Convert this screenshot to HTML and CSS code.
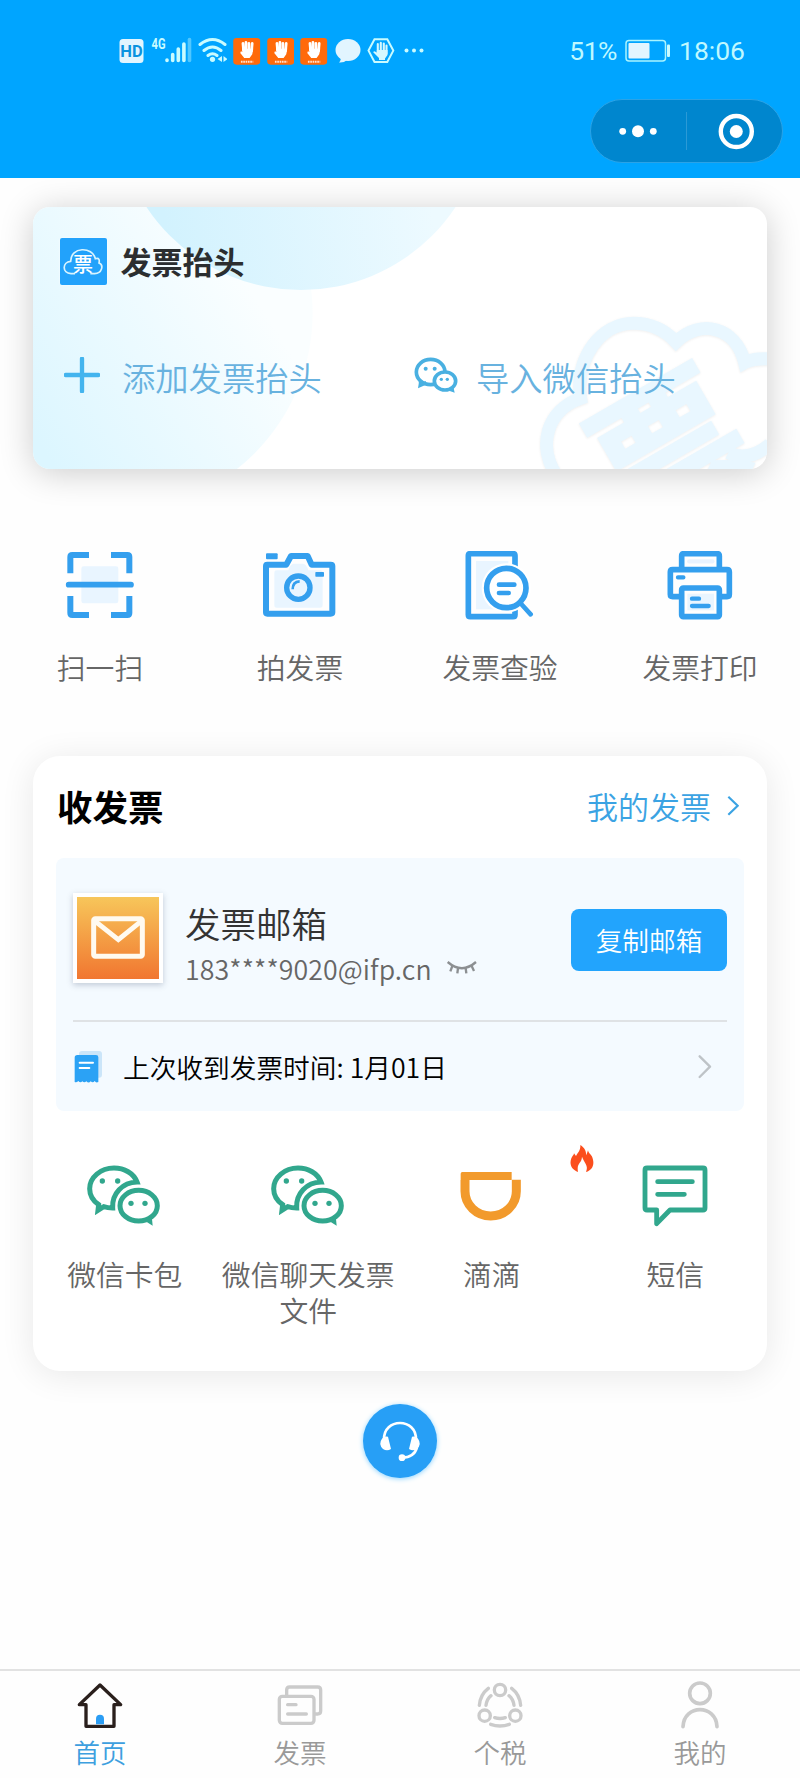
FILE: index.html
```html
<!DOCTYPE html>
<html lang="zh-CN">
<head>
<meta charset="utf-8">
<title>发票</title>
<link rel="stylesheet" href="styles.css">
</head>
<body>
<svg class="defs" aria-hidden="true">
  <symbol id="hand" viewBox="400 52 81 81">
    <rect x="400" y="52" width="81" height="80" rx="10" fill="#ff6a0a"/>
    <path d="M429 68l2 22M438 65v25M447 68v22M457 68l-2 23" stroke="#fff" stroke-width="8" stroke-linecap="round"/>
    <path d="M426 84h34l-3 17-8 11h-16l-12-15 2-5 5 2z" fill="#fff"/>
    <path d="M423 123h37" stroke="#ffe3d0" stroke-width="6" stroke-dasharray="5 2"/>
  </symbol>
  <symbol id="wechat" viewBox="200 130 225 192">
    <path d="M353 187C343 161 315 145 284 145c-40 0-73 28-73 62 0 20 10 36 27 48l-2 17 17-11c9 3 17 4 27 4-3-43 30-77 73-78z" fill="none" stroke="currentColor" stroke-width="15"/>
    <ellipse cx="358" cy="258" rx="56" ry="46" fill="none" stroke="currentColor" stroke-width="15"/>
    <path d="M374 302l26 16-3-30z" fill="currentColor"/>
    <g fill="currentColor"><circle cx="249" cy="184" r="8"/><circle cx="295" cy="184" r="8"/><circle cx="335" cy="251" r="8"/><circle cx="377" cy="251" r="8"/></g>
  </symbol>
</svg>

<header class="top">
  <div class="status">
    <div class="status-icons">
      <svg width="26" height="30" viewBox="119 36 26 30"><rect x="119.5" y="39" width="24" height="24" rx="3.5" fill="#e2f5ff"/><text x="131.5" y="56.500" class="hd">HD</text></svg>
      <svg width="41" height="30" viewBox="151 36 41 30"><text x="151.5" y="49" class="net" textLength="14" lengthAdjust="spacingAndGlyphs">4G</text><g stroke="#c9fbff" stroke-width="3.6" stroke-linecap="round"><path d="M167 60v.5M172.7 54.500v6M178.300 49v11.500M183.900 44v16.500"/><path d="M189.500 39.500v21" opacity=".4"/></g></svg>
      <svg width="29" height="30" viewBox="198 36 29 30"><g fill="none" stroke="#c9fbff" stroke-width="3" stroke-linecap="round"><path d="M200 44.500q12.500-10 25 0M204 50.500q8.500-7 17 0M208 55.500q4.500-3.500 9 0"/></g><circle cx="212.500" cy="59.300" r="2.600" fill="#c9fbff"/><path d="M222 56v6l-4.500-3zM223.500 62v-6l4 3z" fill="#c9fbff"/></svg>
      <svg width="27.500" height="27"><use href="#hand"/></svg>
      <svg width="27.500" height="27"><use href="#hand"/></svg>
      <svg width="27.500" height="27"><use href="#hand"/></svg>
      <svg width="27" height="30" viewBox="333.500 36 27 30"><ellipse cx="347.500" cy="50" rx="12.500" ry="11" fill="#e2f5ff"/><path d="M340 56q1 4-1.500 6.500 5 .5 9-3z" fill="#e2f5ff"/></svg>
      <svg width="28" height="30" viewBox="366.500 36 28 30"><path d="M374 39.300h12.800l6 11.300-6 11.300H374l-6-11.300z" fill="none" stroke="#c9fbff" stroke-width="2"/><path d="M377.300 44v8M380.300 42.800v8M383.300 43.500v8M386 45.500v8" stroke="#d5f8ff" stroke-width="2.100" stroke-linecap="round"/><path d="M376.300 50H387v5l-2.500 3.500V60h-6v-2l-6-6 1.500-.7 2.300 1.200z" fill="#d5f8ff"/></svg>
      <svg width="24" height="30" viewBox="400.500 36 24 30" fill="#c9fbff"><circle cx="406" cy="50.500" r="2"/><circle cx="413.500" cy="50.500" r="2"/><circle cx="421" cy="50.500" r="2"/></svg>
    </div>
    <div class="status-right">
      <span class="pct">51%</span>
      <svg width="46" height="24" viewBox="624 39 46 24"><rect x="626" y="40.500" width="39.500" height="20.500" rx="3" fill="none" stroke="#a9f4ff" stroke-width="1.500"/><rect x="628.500" y="43" width="21" height="15.500" rx="1" fill="#e2f5ff"/><rect x="667" y="44.500" width="3" height="12.500" rx="1" fill="#c9fbff"/></svg>
      <span>18:06</span>
    </div>
  </div>
  <div class="capsule">
    <svg width="190" height="62" viewBox="590 99 190 62"><g fill="#fff"><circle cx="621.700" cy="130.300" r="3.400"/><circle cx="637" cy="130.300" r="6"/><circle cx="652.300" cy="130.300" r="3.400"/><circle cx="735.300" cy="130.500" r="6.500"/></g><path d="M685.500 111v38" stroke="#2b9ad6" stroke-width="1"/><circle cx="735.300" cy="130.500" r="15.500" fill="none" stroke="#fff" stroke-width="4.400"/></svg>
  </div>
</header>

<main>
  <section class="title-card">
    <svg class="card-bg" width="734" height="262" viewBox="33 207 734 262">
      <defs>
        <linearGradient id="g1" gradientUnits="userSpaceOnUse" x1="50" y1="460" x2="270" y2="320"><stop offset="0" stop-color="#dcf6ff"/><stop offset="1" stop-color="#fafeff"/></linearGradient>
        <linearGradient id="g2" gradientUnits="userSpaceOnUse" x1="170" y1="250" x2="430" y2="200"><stop offset="0" stop-color="#d2f2fe"/><stop offset="1" stop-color="#edfaff"/></linearGradient>
      </defs>
      <circle cx="114" cy="313" r="198.600" fill="url(#g1)"/>
      <circle cx="301" cy="104.700" r="185.300" fill="url(#g2)"/>
      <g class="mark" transform="translate(400 180) scale(.33333)">
        <path d="M472 890C410 800 440 690 542 655 525 530 605 430 700 430c50 0 95 20 128 56 75-72 180-45 206 62 25-14 50-12 80-12M985 818q60 30 125-25" fill="none" stroke="#e9f7ff" stroke-width="39"/>
        <g transform="translate(806 804) rotate(-30)"><text class="mark-char" y="165">票</text></g>
      </g>
    </svg>
    <div class="card-head">
      <span class="logo"><svg width="47" height="47" viewBox="180 173 141 141"><path d="M226 280h-12c-27-1-27-35-1-37 0-45 66-45 74-8 12-4 13 5 11 13 15 6 9 32-13 32h-13" transform="translate(-1 0)" fill="none" stroke="#d8f4ff" stroke-width="5"/><text x="249" y="275" class="logo-char">票</text></svg></span>
      <h1>发票抬头</h1>
    </div>
    <div class="card-links">
      <a class="link"><svg width="36" height="36" viewBox="192 533 108 108"><path d="M246 538v98M197 587h98" stroke="#43b4ee" stroke-width="13" stroke-linecap="round"/></svg><span>添加发票抬头</span></a>
      <a class="link"><svg width="44" height="36" viewBox="41 532 132 108"><g fill="none" stroke="#49b0e1" stroke-width="11"><ellipse cx="91" cy="577" rx="43" ry="38"/><path d="M62 604l-2 13 18-8"/><ellipse cx="134" cy="604" rx="32" ry="27" fill="#fff"/></g><g fill="#49b0e1"><path d="M142 632l21 7-4-18zM55 604l2 17 14-8z"/><circle cx="76" cy="567" r="6"/><circle cx="103" cy="567" r="6"/><circle cx="123" cy="599" r="5"/><circle cx="141" cy="599" r="5"/></g></svg><span>导入微信抬头</span></a>
    </div>
  </section>

  <nav class="actions">
    <a class="action"><svg width="74" height="70" viewBox="99 65 222 210"><rect x="154" y="111" width="111" height="111" rx="7" fill="#e9f5ff"/><g fill="none" stroke="#349fee" stroke-width="18"><path d="M121 132V83q0-6 6-6h50M243 77h49q6 0 6 6v49M298 200v51q0 6-6 6h-49M177 257h-50q-6 0-6-6v-51"/><path d="M116 166h187" stroke-width="17" stroke-linecap="round"/></g></svg><span>扫一扫</span></a>
    <a class="action"><svg width="74" height="70" viewBox="699 65 222 210"><path d="M740 123h35q6-20 16-20h28q10 0 16 20h35q8 0 8 8v96q0 8-8 8H740q-7 0-7-8v-97q0-7 7-7z" fill="#e9f5ff"/><g fill="none" stroke="#349fee" stroke-width="18" stroke-linejoin="round"><path d="M708 110q0-4 4-4h57l14-26h50l12 26h57q5 0 5 4v139q0 4-5 4H712q-4 0-4-4z"/><circle cx="805" cy="175" r="35" stroke-width="16"/><path d="M788 180q0-23 21-24" stroke-width="8"/></g><g fill="#349fee"><rect x="708" y="72" width="35" height="18" rx="3"/><rect x="856" y="128" width="26" height="14" rx="2"/></g></svg><span>拍发票</span></a>
    <a class="action"><svg width="74" height="70" viewBox="190 64 222 210"><rect x="229" y="94" width="97" height="145" fill="#e9f5ff"/><path d="M346 125V78q0-6-6-6H212q-6 0-6 6v177q0 6 6 6h128q6 0 6-6v-36" fill="none" stroke="#349fee" stroke-width="17"/><circle cx="320" cy="175" r="74" fill="#fff"/><circle cx="320" cy="175" r="59" fill="#fff" stroke="#349fee" stroke-width="17"/><path d="M362 220l31 34M298 165h46M298 190h29" stroke="#349fee" stroke-width="14" stroke-linecap="round"/></svg><span>发票查验</span></a>
    <a class="action"><svg width="74" height="70" viewBox="789 64 222 210"><g fill="none" stroke="#349fee" stroke-width="17" stroke-linejoin="round"><path d="M845 118V79q0-7 7-7h99q7 0 7 7v39M845 201h-27q-7 0-7-7v-67q0-7 7-7h163q7 0 7 7v67q0 7-7 7h-23"/><rect x="845" y="175" width="113" height="86" rx="5"/></g><path d="M868 95h69" stroke="#e9f3ff" stroke-width="13" stroke-linecap="round"/><rect x="862" y="192" width="80" height="50" fill="#e9f5ff"/><path d="M834 143h16M876 207h21M876 229h50" stroke="#349fee" stroke-width="13" stroke-linecap="round"/></svg><span>发票打印</span></a>
  </nav>

  <section class="receive">
    <div class="receive-head">
      <h2>收发票</h2>
      <a>我的发票<svg width="12" height="22" viewBox="922 169 36 66"><path d="M926 174l28 27-28 27" fill="none" stroke="#3ba3e3" stroke-width="6.500"/></svg></a>
    </div>
    <div class="mailbox">
      <div class="mail-row">
        <span class="mail-icon"><svg width="54" height="43" viewBox="212 529 162 129"><rect x="220" y="537" width="146" height="113" rx="5" fill="none" stroke="#fffaf0" stroke-width="15"/><path d="M225 545l69 55 68-55" fill="none" stroke="#fffaf0" stroke-width="15"/></svg></span>
        <div class="mail-text">
          <strong>发票邮箱</strong>
          <span class="addr">183****9020@ifp.cn<svg width="32" height="16" viewBox="77 668 96 48"><path d="M82 674q43 37 85 0M96 686l-6 16M113 692l-2 16M136 692l2 16M154 686l7 15" fill="none" stroke="#8c8f92" stroke-width="7"/></svg></span>
        </div>
        <button>复制邮箱</button>
      </div>
      <div class="last-row">
        <svg width="30" height="34" viewBox="160 930 90 102"><rect x="178" y="933" width="69" height="80" rx="9" fill="#cbe5f9"/><path d="M173 945h56q7 0 7 7v74q-7 4-11-3-5 7-12 1-6 7-13 0-6 6-12 0-6 6-12-1-6 6-11 3v-73q0-8 8-8z" fill="#2ba2f5"/><path d="M180 968h40M180 984h29" stroke="#fff" stroke-width="6" stroke-linecap="round"/></svg>
        <span>上次收到发票时间: 1月01日</span>
        <svg class="chev" width="15" height="24" viewBox="830 945 45 72"><path d="M835 949l31 31-31 31" fill="none" stroke="#bec3c7" stroke-width="7" stroke-linecap="round" stroke-linejoin="round"/></svg>
      </div>
    </div>
    <div class="sources">
      <a class="source"><svg class="green" width="75" height="64"><use href="#wechat"/></svg><span>微信卡包</span></a>
      <a class="source"><svg class="green" width="75" height="64"><use href="#wechat"/></svg><span>微信聊天发票文件</span></a>
      <a class="source"><svg width="75" height="64" viewBox="102 130 225 192"><path d="M135 181v34a77 74 0 0 0 154 0v-35" fill="none" stroke="#f29a2c" stroke-width="27"/><path d="M122 181v-19q0-5 5-5h148v24z" fill="#f29a2c"/></svg><span>滴滴</span><svg class="hot" width="24" height="27" viewBox="449 73 72 81"><path d="M473 154c-19-7-27-23-20-41 3-8 7-8 8-15l6 8c6-12 14-17 13-33 13 8 17 18 18 31l5-15c2 12 12 11 15 28 4 17-3 31-21 37 7-19-1-21-12-46-1 22-17 17-12 46z" fill="#fb4e1d"/></svg></a>
      <a class="source"><svg width="75" height="64" viewBox="655 130 225 192"><path d="M682 145h168q6 0 6 6v114q0 6-6 6H751l-40 41v-41h-29q-6 0-6-6V151q0-6 6-6zM714 186h104M714 224h80" fill="none" stroke="#31a78d" stroke-width="14.500" stroke-linecap="round" stroke-linejoin="round"/></svg><span>短信</span></a>
    </div>
  </section>

  <button class="service" aria-label="客服"><svg width="44" height="44" viewBox="1074 897 132 132"><path d="M1092 960c-3-68 99-68 96 0M1191 982q-8 30-45 31" fill="none" stroke="#fff" stroke-width="8"/><path d="M1104 950l9 37q-12 8-24 0-15-15-3-31 7-9 18-6zM1176 950l-9 37q12 8 24 0 15-15 3-31-7-9-18-6z" fill="#fff"/><circle cx="1146" cy="1013" r="10" fill="#fff"/></svg></button>
</main>

<nav class="tabs">
  <a class="tab active"><svg width="48" height="50" viewBox="228 90 144 150"><path d="M258 226v-62h-20l62-59 62 59h-20v65h-84z" fill="none" stroke="#2a1f1c" stroke-width="10" stroke-linejoin="round"/><path d="M288 223v-17q0-12 12-12t12 12v17z" fill="#2b9df4"/></svg><span>首页</span></a>
  <a class="tab"><svg width="48" height="50" viewBox="828 90 144 150" fill="none" stroke="#cbcbcb" stroke-width="10" stroke-linecap="round"><rect x="838" y="139" width="104" height="81" rx="9"/><path d="M860 135v-15q0-9 9-9h84q9 0 9 9v63q0 9-9 9h-8M863 164h25M863 192h56"/></svg><span>发票</span></a>
  <a class="tab"><svg width="48" height="50" viewBox="228 90 144 150" fill="none" stroke="#cbcbcb" stroke-width="10" stroke-linecap="round"><circle cx="300" cy="120" r="17"/><circle cx="254" cy="197" r="17"/><circle cx="346" cy="197" r="17"/><path d="M265 115q-24 18-27 51M273 137q-12 9-15 29M335 115q24 18 27 51M327 137q12 9 15 29M284 203q16 5 32 0M272 223q28 10 56 0"/></svg><span>个税</span></a>
  <a class="tab"><svg width="48" height="50" viewBox="828 90 144 150" fill="none" stroke="#cbcbcb" stroke-width="11" stroke-linecap="round"><circle cx="900" cy="130" r="31"/><path d="M849 230c3-68 99-68 102 0"/></svg><span>我的</span></a>
</nav>
</body>
</html>
```

FILE: styles.css
```css
* { box-sizing: border-box; }
body {
  margin: 0;
  width: 800px;
  height: 1778px;
  display: flex;
  flex-direction: column;
  background: #fefefe;
  font-family: "Noto Sans CJK SC", sans-serif;
  font-weight: 350;
  overflow: hidden;
}
svg { display: block; flex: none; }
.defs { width: 0; height: 0; position: absolute; }
h1, h2 { margin: 0; line-height: 1; }
button { border: 0; padding: 0; font: inherit; }

/* header */
.top {
  height: 178px;
  flex: none;
  background: #00a5ff;
  display: flex;
  flex-direction: column;
  align-items: flex-end;
  padding-top: 35px;
}
.status {
  width: 100%;
  height: 32px;
  display: flex;
  justify-content: space-between;
  padding: 0 55px 0 119px;
}
.status-icons, .status-right { display: flex; align-items: center; }
.status-icons { gap: 6px; }
.status-right {
  gap: 9px;
  color: #bff8ff;
  font: 26.5px/32px Roboto, sans-serif;
}
.pct { margin-right: -2px; letter-spacing: -.5px; }
.hd { font: bold 16.5px Roboto, sans-serif; fill: #0a93e0; text-anchor: middle; }
.net { font: bold 14.5px Roboto, sans-serif; fill: #c9fbff; }
.capsule {
  width: 193px;
  height: 64px;
  margin: 31.5px 17.5px 0 0;
  border: 1.5px solid #2ba3e6;
  border-radius: 32px;
  background: #0086ce;
}

/* invoice title card */
.title-card {
  position: relative;
  width: 734px;
  height: 262px;
  margin: 29px 33px 0;
  border-radius: 17px;
  background: #fff;
  box-shadow: 0 4px 34px rgba(0, 0, 0, .2);
}
.card-bg { position: absolute; inset: 0; border-radius: 17px; }
.mark { filter: drop-shadow(0 2px 3px rgba(0, 0, 0, .07)); }
.mark-char {
  font-size: 440px;
  font-weight: 700;
  fill: #e9f7ff;
  stroke: #e9f7ff;
  stroke-width: 8px;
  text-anchor: middle;
}
.card-head {
  position: relative;
  display: flex;
  align-items: center;
  gap: 13.5px;
  padding: 30.5px 0 0 27px;
}
.card-head h1 { margin-top: -2px; }
.logo { background: #22a2fb; border-radius: 2px; box-shadow: 0 0 2px #fff; }
.logo-char { font-size: 60px; font-weight: 500; fill: #fff; text-anchor: middle; }
h1 { font-size: 31px; font-weight: 700; color: #2b2e30; }
.card-links {
  position: relative;
  display: flex;
  padding: 70px 0 0 31px;
}
.link {
  display: flex;
  align-items: center;
  gap: 22px;
  height: 43px;
  font-size: 33.3px;
  line-height: 43px;
  color: #68b2df;
}
.link:first-child { width: 350px; }
.link:last-child { gap: 18px; }
.link svg { margin-top: -3px; }

/* quick actions */
.actions { display: flex; padding-top: 82px; }
.action {
  width: 200px;
  display: flex;
  flex-direction: column;
  align-items: center;
  font-size: 28.8px;
  line-height: 36px;
  color: #666;
}
.action span { margin-top: 28px; }

/* receive invoices */
.receive {
  width: 734px;
  height: 615px;
  margin: 71px 33px 0;
  border-radius: 27px;
  background: #fff;
  box-shadow: 0 4px 34px rgba(0, 0, 0, .09);
}
.receive-head {
  height: 102px;
  display: flex;
  align-items: center;
  justify-content: space-between;
  padding: 0 28px 2px 24px;
}
h2 { font-size: 35.5px; font-weight: 700; color: #000; }
.receive-head a {
  display: flex;
  align-items: center;
  gap: 16px;
  font-size: 31px;
  line-height: 36px;
  color: #3ba3e3;
}
.mailbox {
  height: 253px;
  margin: 0 23px;
  padding: 0 17px;
  border-radius: 8px;
  background: #f4faff;
}
.mail-row {
  height: 164px;
  display: flex;
  align-items: center;
  border-bottom: 2px solid #dfe2e5;
}
.mail-icon {
  width: 90px;
  height: 90px;
  margin-top: -3px;
  display: flex;
  align-items: center;
  justify-content: center;
  border: 4px solid #fff;
  background: linear-gradient(#f7c65a, #f17630);
  box-shadow: 0 2px 6px rgba(40, 60, 90, .25);
}
.mail-text { margin: 12px auto 0 22px; display: flex; flex-direction: column; }
.mail-text strong { font-size: 35.5px; line-height: 46px; font-weight: 350; color: #333; }
.addr {
  display: flex;
  align-items: center;
  gap: 14px;
  font-size: 26.7px;
  letter-spacing: .1px;
  line-height: 45px;
  color: #666;
}
.mail-row button {
  width: 156px;
  height: 62px;
  margin-top: 1px;
  border-radius: 8px;
  background: #22a4fd;
  color: #fff;
  font-size: 26.7px;
}
.last-row {
  height: 90px;
  display: flex;
  align-items: center;
  padding-right: 14px;
  font-size: 26.7px;
  line-height: 36px;
  color: #000;
}
.last-row span { margin-left: 20px; }
.chev { margin-left: auto; }
.sources { display: flex; padding-top: 52px; }
.source {
  position: relative;
  width: 183.5px;
  display: flex;
  flex-direction: column;
  align-items: center;
  font-size: 28.8px;
  line-height: 35.5px;
  text-align: center;
  color: #666;
}
.source span { width: 174px; margin-top: 29px; }
.green { color: #31a78d; margin-right: 2px; }
.hot { position: absolute; left: 169.5px; top: -18.5px; }

.service {
  width: 74px;
  height: 74px;
  margin: 33px auto 0;
  display: flex;
  align-items: center;
  justify-content: center;
  border-radius: 50%;
  background: #279ff6;
  box-shadow: 0 1px 5px #8fd4ff;
}

/* tab bar */
.tabs {
  height: 109px;
  margin-top: auto;
  flex: none;
  display: flex;
  border-top: 2px solid #e2e2e2;
  background: #fefefe;
}
.tab {
  width: 200px;
  display: flex;
  flex-direction: column;
  align-items: center;
  padding-top: 9px;
  font-size: 26.5px;
  line-height: 32px;
  color: #999;
}
.tab span { margin-top: 6px; }
.active { color: #3d9fdf; }
```
